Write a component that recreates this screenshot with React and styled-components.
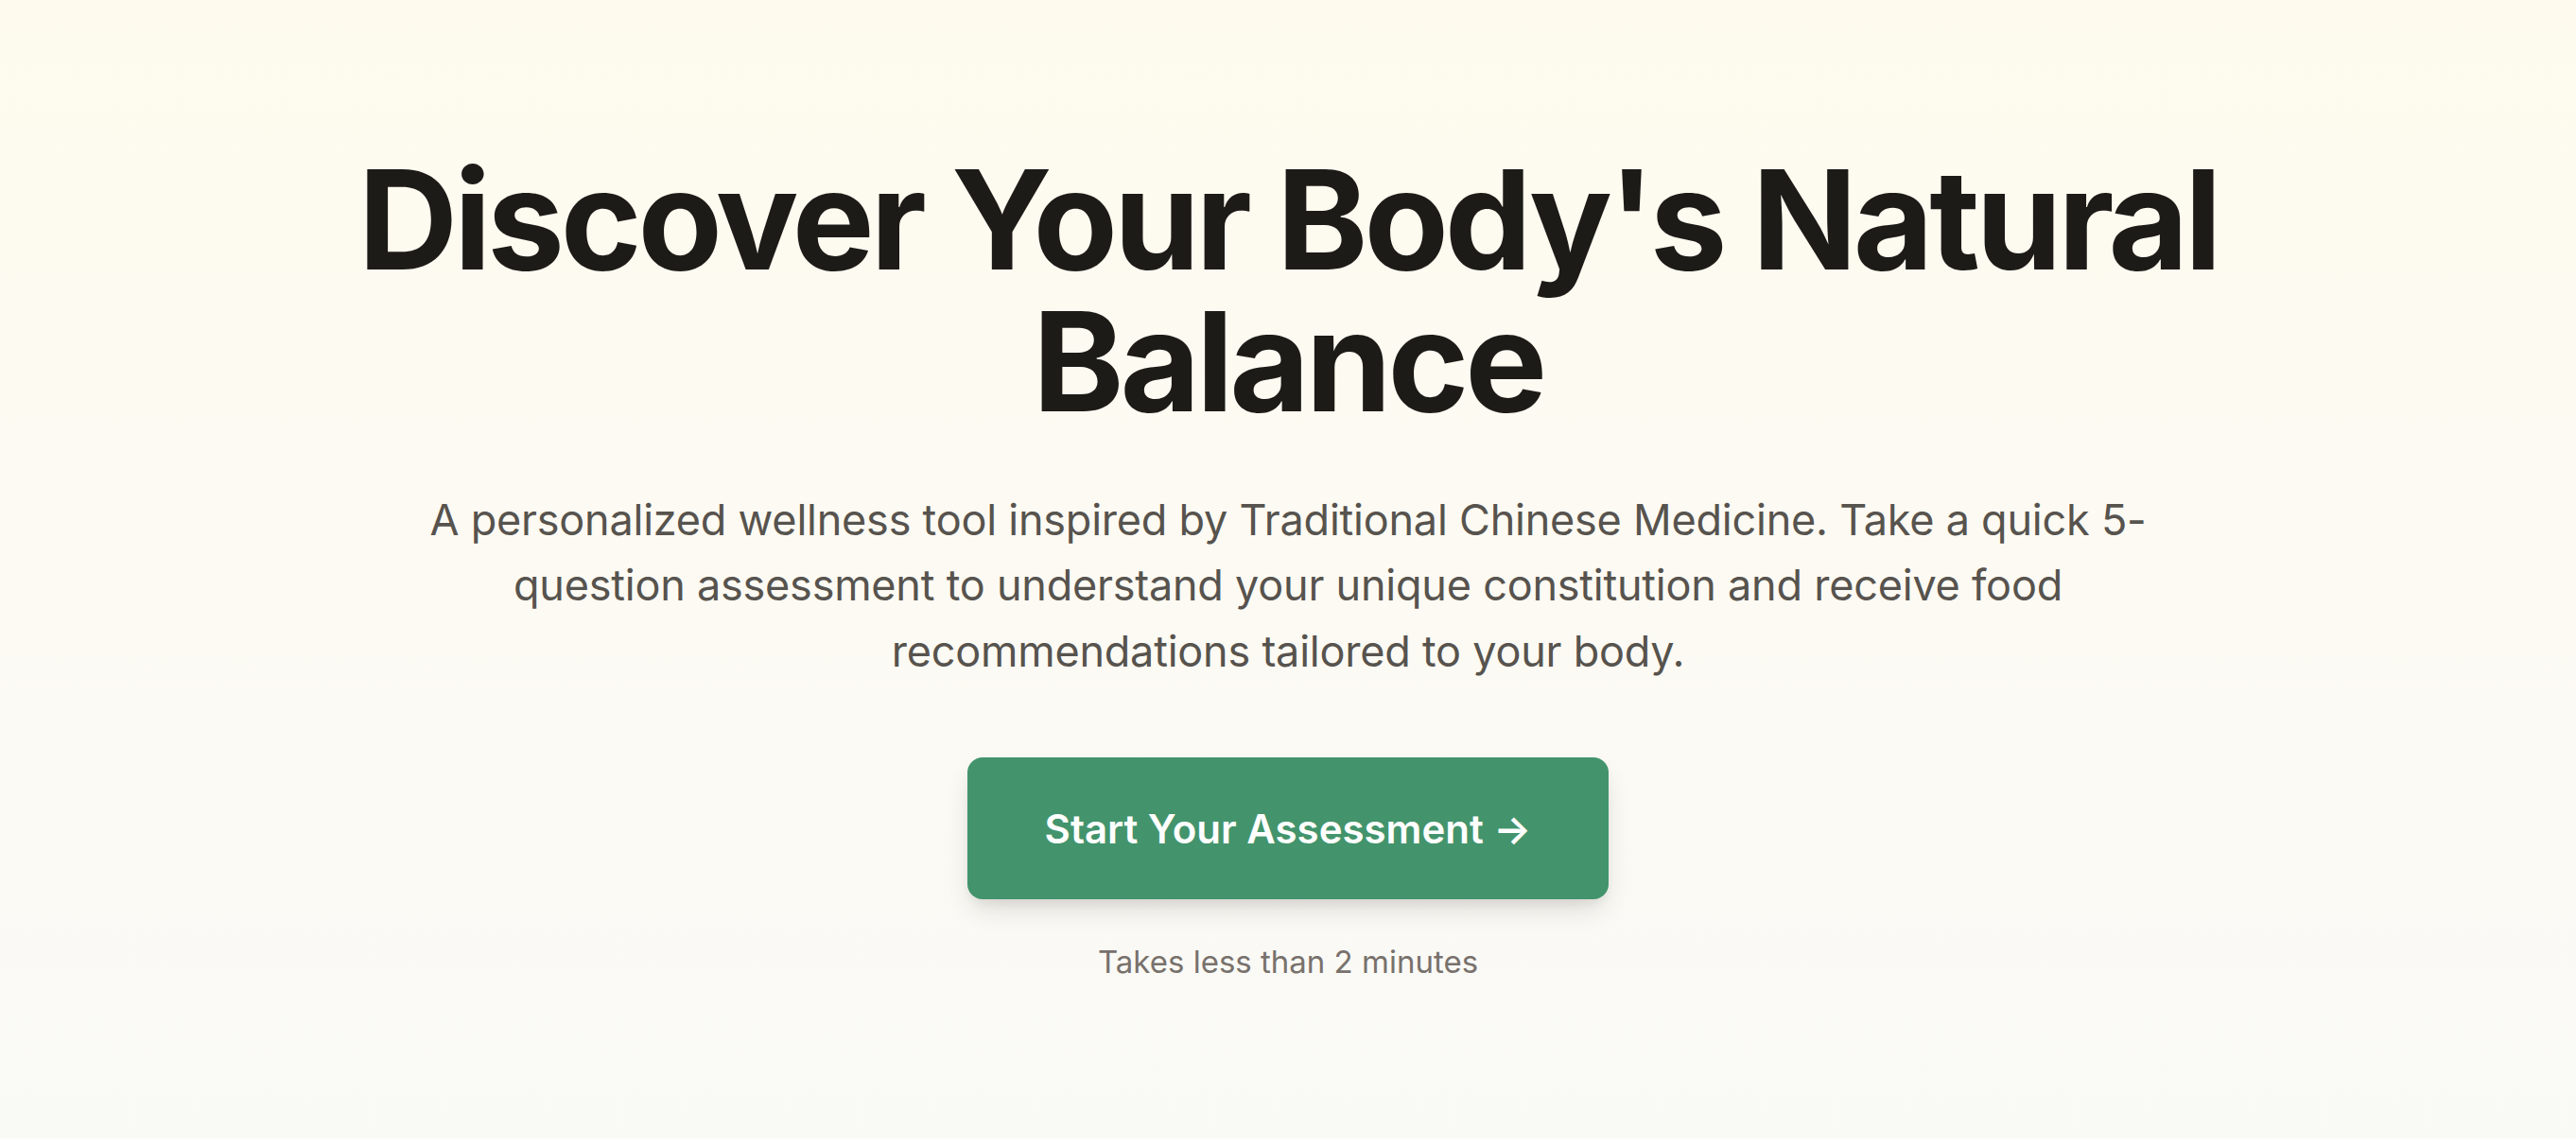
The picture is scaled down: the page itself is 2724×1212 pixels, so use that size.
import styled, { createGlobalStyle } from "styled-components";

const GlobalStyle = createGlobalStyle`
  * {
    box-sizing: border-box;
  }
  body {
    margin: 0;
    background: #ffffff;
    font-family: Inter, "Noto Sans", sans-serif;
  }
`;

const App = () => {
  return (
    <>
      <GlobalStyle />
      <Hero>
        <Title>Discover Your Body's Natural Balance</Title>
        <Intro>
          A personalized wellness tool inspired by Traditional Chinese Medicine. Take a quick 5-question
          assessment to understand your unique constitution and receive food recommendations tailored to
          your body.
        </Intro>
        <StartButton type="button">Start Your Assessment →</StartButton>
        <Note>Takes less than 2 minutes</Note>
      </Hero>
    </>
  );
};

const Hero = styled.main`
  height: 1204px;
  width: 100%;
  display: flex;
  flex-direction: column;
  align-items: center;
  justify-content: center;
  text-align: center;
  padding: 0 120px 7px;
  background: linear-gradient(180deg, #fefbee 0%, #fcfaf3 50%, #f9f9f6 100%);
`;

const Title = styled.h1`
  margin: 0;
  max-width: 2000px;
  font-size: 146px;
  line-height: 150px;
  font-weight: 700;
  letter-spacing: -0.029em;
  color: #1c1b17;
`;

const Intro = styled.p`
  margin: 58px 0 0;
  max-width: 1860px;
  font-size: 45px;
  line-height: 69.5px;
  font-weight: 400;
  letter-spacing: -0.005em;
  color: #57534e;
`;

const StartButton = styled.button`
  margin-top: 78px;
  width: 678px;
  height: 150px;
  border: none;
  border-radius: 16px;
  background: #43946c;
  color: #ffffff;
  font-family: Inter, "Noto Sans", sans-serif;
  font-size: 42px;
  font-weight: 600;
  box-shadow: 0 14px 28px -6px rgba(40, 40, 30, 0.16), 0 6px 12px -4px rgba(40, 40, 30, 0.08);
  cursor: pointer;
`;

const Note = styled.p`
  margin: 43px 0 0;
  font-size: 33px;
  line-height: 46px;
  color: #78716c;
`;

export default App;
